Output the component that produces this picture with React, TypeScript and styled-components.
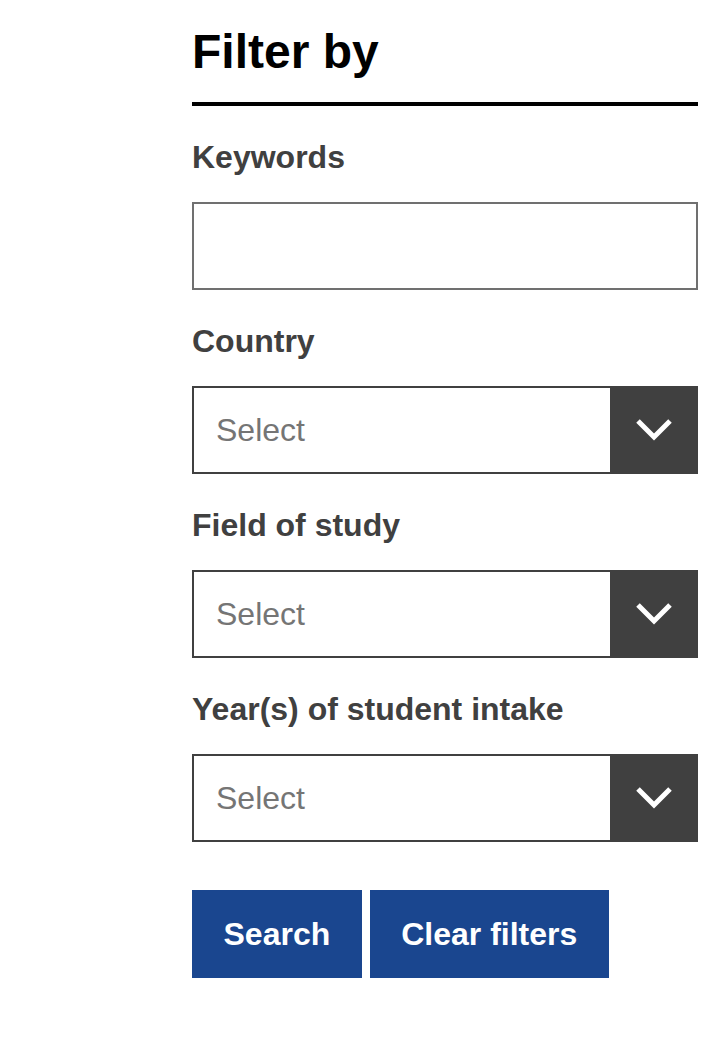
import React from 'react';
import { styled, createGlobalStyle } from 'styled-components';

const GlobalStyle = createGlobalStyle`
  body {
    margin: 0;
    background: #fff;
    font-family: "Liberation Sans", Arial, sans-serif;
  }
`;

function Chevron() {
  return (
    <svg width="40" height="28" viewBox="0 0 40 28" aria-hidden="true">
      <polyline points="4,5 20,21 36,5" fill="none" stroke="#fff" strokeWidth="5" />
    </svg>
  );
}

function SelectField(props: { label: string }) {
  const [value, setValue] = React.useState('');
  return (
    <>
      <Label>{props.label}</Label>
      <SelectWrap>
        <StyledSelect value={value} onChange={(e) => setValue(e.target.value)}>
          <option value="">Select</option>
        </StyledSelect>
        <ArrowBox>
          <Chevron />
        </ArrowBox>
      </SelectWrap>
    </>
  );
}

export default function App() {
  const [keywords, setKeywords] = React.useState('');

  return (
    <Page>
      <GlobalStyle />
      <Panel>
        <Title>Filter by</Title>

        <Label>Keywords</Label>
        <TextInput type="text" value={keywords} onChange={(e) => setKeywords(e.target.value)} />

        <SelectField label="Country" />
        <SelectField label="Field of study" />
        <SelectField label="Year(s) of student intake" />

        <Buttons>
          <Button>Search</Button>
          <Button onClick={() => setKeywords('')}>Clear filters</Button>
        </Buttons>
      </Panel>
    </Page>
  );
}

const Page = styled.div`
  padding: 24px 30px 80px 192px;
`;

const Panel = styled.div`
  width: 506px;
  display: flex;
  flex-direction: column;
`;

const Title = styled.h2`
  margin: 0;
  font-size: 48px;
  line-height: 56px;
  font-weight: 700;
  color: #000;
  padding-bottom: 22px;
  border-bottom: 4px solid #000;
`;

const Label = styled.label`
  display: block;
  margin: 31px 0 25px;
  font-size: 32px;
  line-height: 40px;
  font-weight: 700;
  color: #404040;
`;

const TextInput = styled.input`
  box-sizing: border-box;
  width: 100%;
  height: 88px;
  margin: 0;
  padding: 0 22px;
  border: 2px solid #707070;
  border-radius: 0;
  font-family: inherit;
  font-size: 32px;
  color: #333;
  background: #fff;
  outline: none;
`;

const SelectWrap = styled.div`
  box-sizing: border-box;
  display: flex;
  height: 88px;
  border: 2px solid #404040;
  background: #fff;
`;

const StyledSelect = styled.select`
  flex: 1;
  min-width: 0;
  appearance: none;
  border: 0;
  border-radius: 0;
  margin: 0;
  padding: 0 22px;
  background: transparent;
  font-family: inherit;
  font-size: 32px;
  color: #757575;
  outline: none;
`;

const ArrowBox = styled.span`
  flex: 0 0 88px;
  display: flex;
  align-items: center;
  justify-content: center;
  margin: -2px -2px -2px 0;
  background: #404040;
`;

const Buttons = styled.div`
  display: flex;
  gap: 8px;
  margin-top: 48px;
`;

const Button = styled.button`
  height: 88px;
  padding: 0 31.5px;
  border: 0;
  border-radius: 0;
  background: #1a468f;
  color: #fff;
  font-family: inherit;
  font-size: 32px;
  font-weight: 700;
  cursor: pointer;
`;
